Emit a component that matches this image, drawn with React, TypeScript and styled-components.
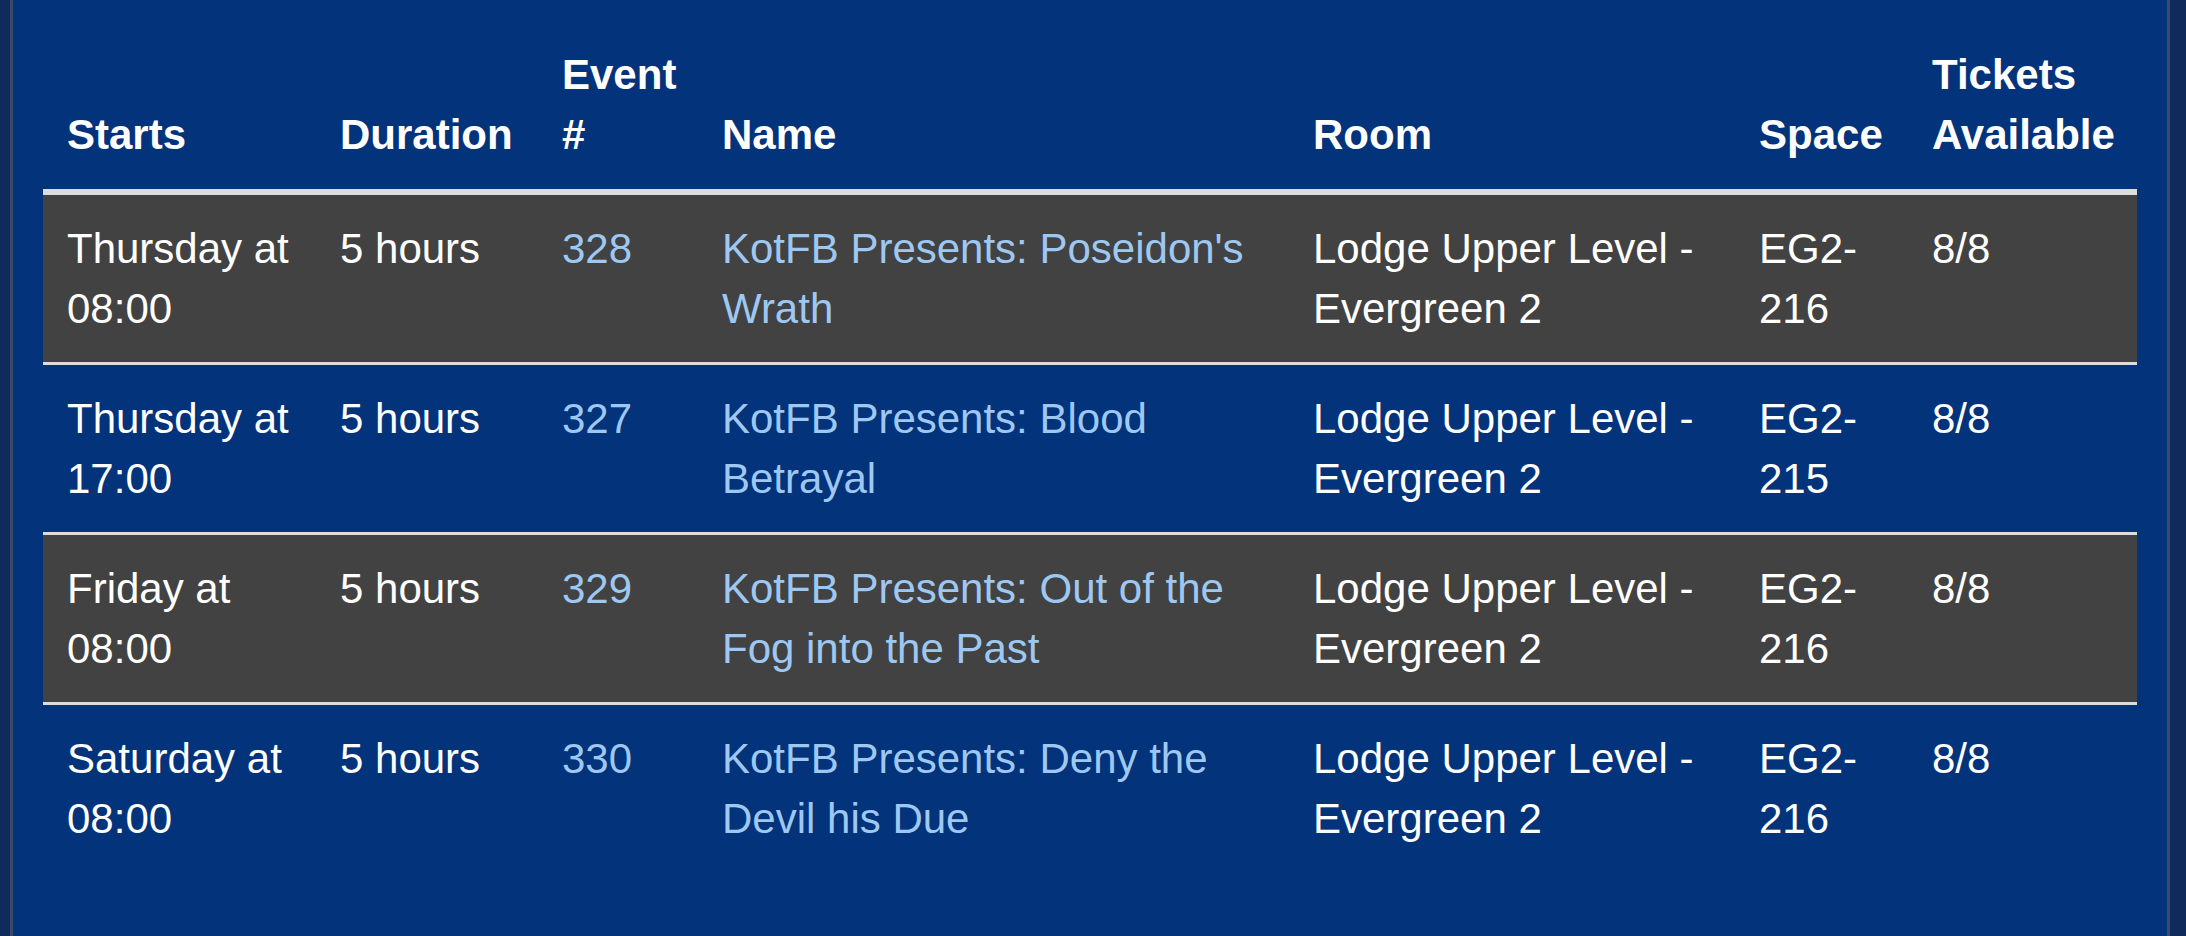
import styled, { createGlobalStyle } from 'styled-components';

interface EventRow {
  starts: string;
  time: string;
  duration: string;
  number: string;
  name: string;
  room: string;
  space: string;
  spaceNo: string;
  tickets: string;
}

const events: EventRow[] = [
  {
    starts: 'Thursday at',
    time: '08:00',
    duration: '5 hours',
    number: '328',
    name: "KotFB Presents: Poseidon's Wrath",
    room: 'Lodge Upper Level - Evergreen 2',
    space: 'EG2-',
    spaceNo: '216',
    tickets: '8/8',
  },
  {
    starts: 'Thursday at',
    time: '17:00',
    duration: '5 hours',
    number: '327',
    name: 'KotFB Presents: Blood Betrayal',
    room: 'Lodge Upper Level - Evergreen 2',
    space: 'EG2-',
    spaceNo: '215',
    tickets: '8/8',
  },
  {
    starts: 'Friday at',
    time: '08:00',
    duration: '5 hours',
    number: '329',
    name: 'KotFB Presents: Out of the Fog into the Past',
    room: 'Lodge Upper Level - Evergreen 2',
    space: 'EG2-',
    spaceNo: '216',
    tickets: '8/8',
  },
  {
    starts: 'Saturday at',
    time: '08:00',
    duration: '5 hours',
    number: '330',
    name: 'KotFB Presents: Deny the Devil his Due',
    room: 'Lodge Upper Level - Evergreen 2',
    space: 'EG2-',
    spaceNo: '216',
    tickets: '8/8',
  },
];

// column widths, measured from the screenshot
const widths = [273, 222, 160, 591, 446, 173, 229];

function App() {
  return (
    <>
      <GlobalStyle />
      <Page>
        <Panel>
          <Table>
            <colgroup>
              {widths.map((w, i) => (
                <Col key={i} $w={w} />
              ))}
            </colgroup>
            <thead>
              <tr>
                <Th>Starts</Th>
                <Th>Duration</Th>
                <Th>Event #</Th>
                <Th>Name</Th>
                <Th>Room</Th>
                <Th>Space</Th>
                <Th>Tickets Available</Th>
              </tr>
            </thead>
            <tbody>
              {events.map((ev, i) => (
                <Row key={ev.number} $striped={i % 2 === 0}>
                  <Td>
                    {ev.starts} {ev.time}
                  </Td>
                  <Td>{ev.duration}</Td>
                  <Td>
                    <Link href="#">{ev.number}</Link>
                  </Td>
                  <Td>
                    <Link href="#">{ev.name}</Link>
                  </Td>
                  <Td>{ev.room}</Td>
                  <Td>
                    {ev.space}
                    <wbr />
                    {ev.spaceNo}
                  </Td>
                  <Td>{ev.tickets}</Td>
                </Row>
              ))}
            </tbody>
          </Table>
        </Panel>
      </Page>
    </>
  );
}
export default App;

const GlobalStyle = createGlobalStyle`
  html, body {
    margin: 0;
    padding: 0;
    background: #102a5b;
  }
  body {
    font-family: 'Liberation Sans', Arial, Helvetica, sans-serif;
    color: #ffffff;
  }
`;

const Page = styled.div`
  height: 100vh;
  padding: 0 16px 0 10px;
  box-sizing: border-box;
  overflow: hidden;
`;

const Panel = styled.div`
  height: 100%;
  box-sizing: border-box;
  background-color: #03337a;
  border-left: 3px solid #3b4a69;
  border-right: 3px solid #3b4a69;
  padding: 21px 30px 0;
`;

const Table = styled.table`
  width: 100%;
  table-layout: fixed;
  border-collapse: collapse;
  border-spacing: 0;
  font-size: 42px;
  line-height: 60px;
`;

const Col = styled.col<{ $w: number }>`
  width: ${(p) => p.$w}px;
`;

const Th = styled.th`
  text-align: left;
  vertical-align: bottom;
  font-weight: 700;
  padding: 24px;
  border-bottom: 6px solid #dddddd;
`;

const Row = styled.tr<{ $striped: boolean }>`
  background-color: ${(p) => (p.$striped ? '#424242' : 'transparent')};
`;

// the header's thicker bottom border wins over the first row's top border
const Td = styled.td`
  vertical-align: top;
  padding: 24px 24px 23px;
  font-weight: 400;
  border-top: 3px solid #dddddd;
`;

const Link = styled.a`
  color: #9ec8f1;
  text-decoration: none;
`;
